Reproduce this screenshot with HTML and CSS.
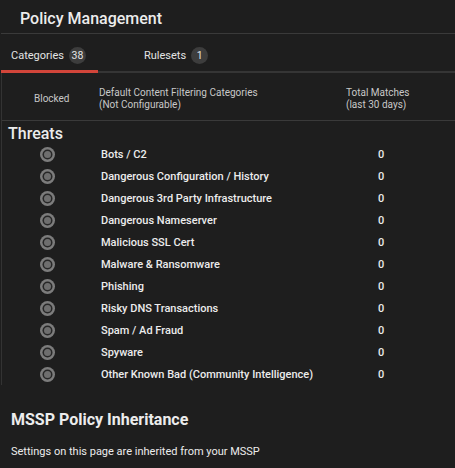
FILE: index.html
```html
<!DOCTYPE html>
<html lang="en">
<head>
    <meta charset="UTF-8">
    <title>Policy Management</title>
    <link rel="stylesheet" href="styles.css">
</head>
<body>

<div class="page">
    <h1 class="page-title">Policy Management</h1>

    <!-- Tabs -->
    <div class="tabs">
        <div class="tab active">Categories <span class="badge">38</span></div>
        <div class="tab">Rulesets <span class="badge">1</span></div>
    </div>

    <!-- Category table -->
    <div class="table">
        <div class="row head">
            <div class="col-blocked">Blocked</div>
            <div class="col-name">Default Content Filtering Categories<br>(Not Configurable)</div>
            <div class="col-count">Total Matches<br>(last 30 days)</div>
        </div>
        <div class="group">Threats</div>
        <div class="row"><div class="col-blocked"><span class="radio"></span></div><div class="col-name">Bots / C2</div><div class="col-count">0</div></div>
        <div class="row"><div class="col-blocked"><span class="radio"></span></div><div class="col-name">Dangerous Configuration / History</div><div class="col-count">0</div></div>
        <div class="row"><div class="col-blocked"><span class="radio"></span></div><div class="col-name">Dangerous 3rd Party Infrastructure</div><div class="col-count">0</div></div>
        <div class="row"><div class="col-blocked"><span class="radio"></span></div><div class="col-name">Dangerous Nameserver</div><div class="col-count">0</div></div>
        <div class="row"><div class="col-blocked"><span class="radio"></span></div><div class="col-name">Malicious SSL Cert</div><div class="col-count">0</div></div>
        <div class="row"><div class="col-blocked"><span class="radio"></span></div><div class="col-name">Malware &amp; Ransomware</div><div class="col-count">0</div></div>
        <div class="row"><div class="col-blocked"><span class="radio"></span></div><div class="col-name">Phishing</div><div class="col-count">0</div></div>
        <div class="row"><div class="col-blocked"><span class="radio"></span></div><div class="col-name">Risky DNS Transactions</div><div class="col-count">0</div></div>
        <div class="row"><div class="col-blocked"><span class="radio"></span></div><div class="col-name">Spam / Ad Fraud</div><div class="col-count">0</div></div>
        <div class="row"><div class="col-blocked"><span class="radio"></span></div><div class="col-name">Spyware</div><div class="col-count">0</div></div>
        <div class="row"><div class="col-blocked"><span class="radio"></span></div><div class="col-name">Other Known Bad (Community Intelligence)</div><div class="col-count">0</div></div>
    </div>

    <!-- Inheritance note -->
    <div class="inherit">
        <h2>MSSP Policy Inheritance</h2>
        <p>Settings on this page are inherited from your MSSP</p>
    </div>
</div>

</body>
</html>
```

FILE: styles.css
```css
html, body {
    margin: 0;
    background-color: #1e1e1e;
}
body {
    font-family: Roboto, "Noto Sans", sans-serif;
    color: #ececec;
}
.page {
    padding-left: 1px;
}
.page-title {
    margin: 0;
    height: 33px;
    line-height: 38px;
    padding-left: 19px;
    font-size: 16px;
    font-weight: 500;
    border-bottom: 1px solid #3a3a3a;
}
.tabs {
    display: flex;
    height: 37px;
    border-bottom: 2px solid #353535;
}
.tab {
    display: flex;
    align-items: center;
    font-size: 11px;
    color: #e4e4e4;
    padding: 5px 10px 0 10px;
    box-sizing: border-box;
    width: 97px;
}
.tab + .tab {
    margin-left: 36px;
}
.tab.active {
    border-bottom: 3px solid #d2453a;
    margin-bottom: -2px;
    padding-top: 6px;
}
.badge {
    display: inline-block;
    width: 17px;
    height: 17px;
    line-height: 17px;
    border-radius: 50%;
    background-color: #3d3d3d;
    text-align: center;
    font-size: 10.5px;
    margin-left: 5px;
}
.table {
    border-left: 1px solid #333333;
}
.row {
    display: flex;
    align-items: center;
    height: 22px;
    font-size: 11px;
    font-weight: 500;
}
.row.head {
    height: 48px;
    box-sizing: border-box;
    padding-top: 5px;
    font-size: 10px;
    font-weight: 400;
    color: #c8c8c8;
    line-height: 12px;
    border-bottom: 1px solid #3a3a3a;
}
.col-blocked {
    width: 99px;
    display: flex;
    padding-left: 42px;
    box-sizing: border-box;
}
.head .col-blocked {
    width: 97px;
    padding-left: 32px;
}
.col-name {
    width: 245px;
}
.head .col-name {
    width: 247px;
}
.col-count {
    padding-left: 32px;
}
.head .col-count {
    padding-left: 0;
}
.group {
    font-size: 16px;
    font-weight: 500;
    height: 22px;
    line-height: 25px;
    padding-left: 6px;
}
.radio {
    width: 7px;
    height: 7px;
    border-radius: 50%;
    background-color: #6e6e6e;
    box-shadow: 0 0 0 1.5px #272727, 0 0 0 4px #7c7c7c;
}
.inherit {
    padding: 25px 10px 0 10px;
}
.inherit h2 {
    margin: 0;
    font-size: 16px;
    font-weight: 700;
}
.inherit p {
    margin: 16px 0 0 0;
    font-size: 11px;
}
```
